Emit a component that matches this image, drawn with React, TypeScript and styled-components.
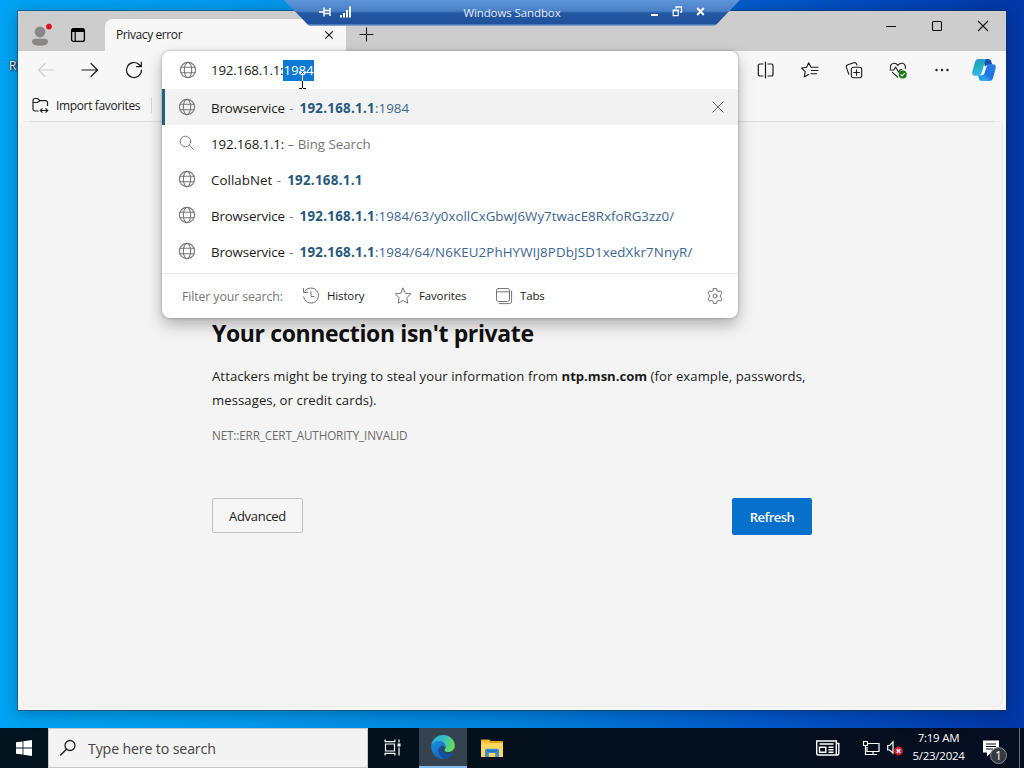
import type { ReactNode } from 'react';
import styled, { createGlobalStyle } from 'styled-components';

const suggestions = [
  { title: 'Browservice', host: '192.168.1.1', rest: ':1984', active: true },
  { title: '192.168.1.1:', note: 'Bing Search', search: true },
  { title: 'CollabNet', host: '192.168.1.1', tracking: 0.05 },
  {
    title: 'Browservice',
    host: '192.168.1.1',
    rest: ':1984/63/y0xollCxGbwJ6Wy7twacE8RxfoRG3zz0/',
  },
  {
    title: 'Browservice',
    host: '192.168.1.1',
    rest: ':1984/64/N6KEU2PhHYWIJ8PDbJSD1xedXkr7NnyR/',
    restTracking: 0.13,
  },
];

type IconProps = {
  color?: string;
  width?: number;
  children?: ReactNode;
};

function Icon({ color = '#1b1b1b', width = 1.1, children }: IconProps) {
  return (
    <svg
      width="20"
      height="20"
      viewBox="0 0 20 20"
      fill="none"
      stroke={color}
      strokeWidth={width}
      strokeLinecap="round"
      strokeLinejoin="round"
    >
      {children}
    </svg>
  );
}

function Globe() {
  return (
    <Icon color="#757575">
      <circle cx="10" cy="10" r="7.6" />
      <ellipse cx="10" cy="10" rx="3.7" ry="7.6" />
      <path d="M3.2 7.2h13.6M3.2 12.8h13.6" />
    </Icon>
  );
}

function Magnifier() {
  return (
    <Icon color="#7a7a7a" width={1}>
      <circle cx="8.5" cy="8.5" r="5.3" />
      <path d="M12.4 12.4l4.3 4.2" />
    </Icon>
  );
}

function TitleBar() {
  return (
    <TitleStrip>
      <ProfileBox>
        <svg width="24" height="26" viewBox="0 0 24 26">
          <circle cx="12" cy="11" r="5.4" fill="#8a8886" />
          <path
            d="M4 20.5c0-2 1.5-2.8 3-2.8h10c1.5 0 3 .8 3 2.8 0 3-3.5 4.3-8 4.3s-8-1.3-8-4.3z"
            fill="#8a8886"
          />
          <circle cx="21" cy="5.6" r="2.9" fill="#e01020" />
        </svg>
      </ProfileBox>
      <TabActionsBox>
        <svg width="16" height="16" viewBox="0 0 16 16">
          <rect x="1.6" y="1.6" width="12.8" height="12.8" rx="2" fill="none" stroke="#000" strokeWidth="1.3" />
          <path d="M1.5 5V3.2C1.5 2 2.3 1.5 3.2 1.5h9.6c1 0 1.7.6 1.7 1.7V5z" fill="#000" />
          <path d="M5.2 5v9.5" stroke="#000" strokeWidth="1.2" />
        </svg>
      </TabActionsBox>
      <Tab>
        <TabTitle>Privacy error</TabTitle>
        <svg width="10" height="10" viewBox="0 0 10 10">
          <path d="M1.3 1.3l7.4 7.4M8.7 1.3L1.3 8.7" stroke="#1b1b1b" strokeWidth="1.2" />
        </svg>
      </Tab>
      <NewTab>
        <svg width="15" height="15" viewBox="0 0 15 15">
          <path d="M7.5 .5v14M.5 7.5h14" stroke="#1b1b1b" strokeWidth="1.1" />
        </svg>
      </NewTab>
      <CaptionButtons>
        <svg width="46" height="32" viewBox="0 0 46 32">
          <path d="M18 15.5h10" stroke="#111" />
        </svg>
        <svg width="46" height="32" viewBox="0 0 46 32">
          <rect x="18.5" y="10.5" width="9" height="9" rx="1" fill="none" stroke="#111" strokeWidth="1.1" />
        </svg>
        <svg width="46" height="32" viewBox="0 0 46 32">
          <path d="M18 10l10 10M28 10l-10 10" stroke="#111" strokeWidth="1.1" />
        </svg>
      </CaptionButtons>
    </TitleStrip>
  );
}

function Toolbar() {
  return (
    <ToolbarRow>
      <ToolGroup>
        <ToolButton>
          <Icon color="#cfcfcf">
            <path d="M17.5 10H2.5M9 3.5L2.5 10 9 16.5" />
          </Icon>
        </ToolButton>
        <ToolButton>
          <Icon width={1.2}>
            <path d="M2 10h15.5M11 3.5l6.5 6.5-6.5 6.5" />
          </Icon>
        </ToolButton>
        <ToolButton>
          <Icon width={1.2}>
            <path d="M17.5 10a7.5 7.5 0 1 1-2.4-5.5l2 2M17.3 2v4.7h-4.7" />
          </Icon>
        </ToolButton>
      </ToolGroup>
      <ToolGroup>
        <ToolButton>
          <Icon width={1.2}>
            <path d="M7 4H3.9a1.6 1.6 0 0 0-1.6 1.6v8.8A1.6 1.6 0 0 0 3.900 16H7M12 4h3.400a1.600 1.600 0 0 1 1.600 1.600v8.800a1.600 1.600 0 0 1-1.600 1.600H12M9.500 2v16" />
          </Icon>
        </ToolButton>
        <ToolButton>
          <Icon>
            <path d="M11 7.3L8.7 2.8 6.6 7.3 1.6 8l3.6 3.6-.9 5.2 4.3-2.3M11 7.3h7M11.5 10.5H18M11 13.7h5.5" />
          </Icon>
        </ToolButton>
        <ToolButton>
          <Icon>
            <rect x="7.3" y="7.3" width="10.4" height="10.4" rx="2.2" />
            <path d="M12.5 9.7v5.6M9.7 12.5h5.6M4.8 14.3L2.4 7.4a2.2 2.2 0 0 1 1.4-2.7l6-2a2.2 2.2 0 0 1 2.8 1.4l.3 1" />
          </Icon>
        </ToolButton>
        <ToolButton>
          <Icon>
            <path d="M2.5 8.6c-.7-2.9 1-5.3 3.6-5.3 1.7 0 2.9.8 3.8 2.1.9-1.3 2.1-2.1 3.8-2.1 2.6 0 4.3 2.4 3.7 5.2M2 10h3.8l1.8-3 3 5 1.7-2.3h1.8M4.5 12.4l5.2 4.8" />
            <circle cx="14.7" cy="14.6" r="4" fill="#107c10" stroke="none" />
            <path d="M12.9 14.7l1.3 1.3 2.3-2.6" stroke="#fff" />
          </Icon>
        </ToolButton>
        <ToolButton>
          <Icon>
            <g fill="#1b1b1b" stroke="none">
              <circle cx="4.5" cy="10" r="1.2" />
              <circle cx="10" cy="10" r="1.2" />
              <circle cx="15.5" cy="10" r="1.2" />
            </g>
          </Icon>
        </ToolButton>
        <CopilotLogo />
      </ToolGroup>
    </ToolbarRow>
  );
}

function CopilotLogo() {
  return (
    <svg width="40" height="26" viewBox="0 0 40 26">
      <defs>
        <linearGradient id="copilotLeft" x1="0" y1="0" x2="0.3" y2="1">
          <stop offset="0" stopColor="#2b8fd0" />
          <stop offset="0.5" stopColor="#1fb0bd" />
          <stop offset="1" stopColor="#35b5f2" />
        </linearGradient>
        <linearGradient id="copilotRight" x1="0" y1="1" x2="0.7" y2="0">
          <stop offset="0" stopColor="#38c6f4" />
          <stop offset="0.45" stopColor="#2173ea" />
          <stop offset="1" stopColor="#2b7be4" />
        </linearGradient>
      </defs>
      <path d="M19 2h5.2c1.8 0 2.6.9 3.1 2.4l1 3.4h-3.6c-2 0-3 1-3.5 2.8z" fill="#1750b0" />
      <path d="M21 24h-3c-1.8 0-2.6-1-3.2-2.7l-.9-3.1h3.4c2 0 2.8-1 3.4-2.9l1.4-3z" fill="#1aa0e8" />
      <path
        d="M14.4 2h8.6c-1.4.6-1.9 1.9-2.3 3.4l-2.9 10.2c-.6 2-1.7 3.2-3.6 3.2h-3c-2.6 0-3.5-1.8-2.8-4.2l2.5-9.3C11.5 3.2 12.5 2 14.4 2z"
        fill="url(#copilotLeft)"
      />
      <path
        d="M25.6 24H17c1.4-.6 1.9-1.9 2.3-3.4l2.9-10.2c.6-2 1.7-3.2 3.6-3.2h3c2.6 0 3.5 1.8 2.8 4.2l-2.5 9.3c-.6 2.1-1.6 3.3-3.5 3.3z"
        fill="url(#copilotRight)"
      />
      <path d="M20.800 9.200h1.800l-2.800 8.200h-2.600c.8-.5 1.200-1.300 1.500-2.300z" fill="#f7f7f7" />
    </svg>
  );
}

function AddressPopup() {
  return (
    <Popup>
      <AddressRow>
        <IconSlot $nudge={1}>
          <Globe />
        </IconSlot>
        <AddressText>
          192.168.1.1:<Selection>1984</Selection>
        </AddressText>
        <TextCursor width="9" height="19" viewBox="0 0 9 19">
          <path d="M4.500 2v8" stroke="#fff" />
          <path d="M4.500 10v7M1 17.500h3M5 17.500h3" stroke="#111" />
          <path d="M1 1.500h3M5 1.500h3" stroke="#fff" />
        </TextCursor>
      </AddressRow>
      {suggestions.map((item, index) => (
        <SuggestionRow key={index} $active={item.active}>
          <IconSlot>{item.search ? <Magnifier /> : <Globe />}</IconSlot>
          <SuggestionText $tracking={item.tracking}>
            <Name>{item.title}</Name>
            {item.note && <Note> – {item.note}</Note>}
            {item.host && <Dash>-</Dash>}
            {item.host && <Host>{item.host}</Host>}
            {item.rest && <Rest $tracking={item.restTracking}>{item.rest}</Rest>}
          </SuggestionText>
          {item.active && (
            <svg width="14" height="14" viewBox="0 0 14 14">
              <path d="M1.500 1.500l11 11M12.500 1.500l-11 11" stroke="#6b6b6b" />
            </svg>
          )}
        </SuggestionRow>
      ))}
      <FilterRow>
        <FilterLabel>Filter your search:</FilterLabel>
        <FilterButton $width={92}>
          <Icon color="#666" width={0.9}>
            <path d="M3.700 5.200A7.600 7.600 0 1 1 2.500 11M2.500 2.500v4h4M10 5.800v4.700h3" />
          </Icon>
          History
        </FilterButton>
        <FilterButton $width={101}>
          <Icon color="#666" width={0.9}>
            <path d="M10 2.200l2.400 5 5.400.7-4 3.800 1 5.500-4.800-2.700-4.800 2.700 1-5.500-4-3.800 5.400-.7z" />
          </Icon>
          Favorites
        </FilterButton>
        <FilterButton $width={60}>
          <Icon color="#666" width={0.9}>
            <rect x="2.500" y="2.500" width="13" height="13" rx="2" />
            <path d="M2.500 5.800h13M5 17.600h10.200a2.400 2.400 0 0 0 2.400-2.400V5" />
          </Icon>
          Tabs
        </FilterButton>
        <SettingsSlot>
          <Icon color="#666" width={0.95}>
            <path d="M8.500 2.600h3l.5 2.200 1.400.8 2.200-.7 1.500 2.600L15.400 9v2l1.700 1.500-1.500 2.600-2.200-.7-1.400.8-.5 2.200h-3L8 15.200l-1.400-.8-2.200.7-1.500-2.600L4.600 11V9L2.900 7.500l1.500-2.600 2.200.7L8 4.800z" />
            <circle cx="10" cy="10" r="2" />
          </Icon>
        </SettingsSlot>
      </FilterRow>
    </Popup>
  );
}

function SandboxBar() {
  return (
    <ConnectionBar>
      <ConnectionTools $gap={8}>
        <svg width="14" height="12" viewBox="0 0 14 12">
          <path d="M1 6h5M6 1.500v9M12 2v8M6 4.500h6M6 7.500h6" stroke="#fff" strokeWidth="1.500" />
        </svg>
        <svg width="12" height="12" viewBox="0 0 12 12">
          <path d="M1 9v2.500M4 7v4.500M7 4v7.500M10 .5v11" stroke="#fff" strokeWidth="1.900" />
        </svg>
      </ConnectionTools>
      <ConnectionTitle>Windows Sandbox</ConnectionTitle>
      <ConnectionTools $gap={11}>
        <svg width="12" height="12" viewBox="0 0 12 12">
          <path d="M2 9h7" stroke="#fff" strokeWidth="2" />
        </svg>
        <svg width="12" height="12" viewBox="0 0 12 12">
          <path d="M1.200 4.600h5v5h-5zM.6 4.200h6.200M4 2.800V1.100h5.500v5H8M3.500 .9h6.600" fill="none" stroke="#fff" strokeWidth="1.200" />
        </svg>
        <svg width="12" height="12" viewBox="0 0 12 12">
          <path d="M2.200 2l6.600 7M8.800 2L2.200 9" stroke="#fff" strokeWidth="1.900" />
        </svg>
      </ConnectionTools>
    </ConnectionBar>
  );
}

function Taskbar() {
  return (
    <TaskbarRow>
      <StartButton>
        <svg width="16" height="16" viewBox="0 0 16 16" fill="#fff">
          <path d="M0 2.300l6.600-.9v6.200H0zM7.400 1.300L16 .1v7.500H7.400zM0 8.400h6.600v6.200L0 13.700zM7.400 8.400H16v7.500l-8.600-1.200z" />
        </svg>
      </StartButton>
      <SearchBox>
        <svg width="18" height="18" viewBox="0 0 18 18">
          <circle cx="11" cy="6.500" r="5" fill="none" stroke="#222" strokeWidth="1.300" />
          <path d="M7.400 10.200L1.200 16.500" stroke="#222" strokeWidth="1.400" />
        </svg>
        Type here to search
      </SearchBox>
      <TaskButtons>
        <TaskButton $width={48}>
          <svg width="18" height="18" viewBox="0 0 18 18" fill="none" stroke="#fff" strokeWidth="1.200">
            <path d="M1.500 6h9v7h-9zM1.100 1.500v2.200h9.800V1.500M1.100 17.500v-2.200h9.800v2.200M15 1.500v3M15 9.500v8" />
            <path d="M13.500 5.500h3v3h-3z" fill="#fff" stroke="none" />
          </svg>
        </TaskButton>
        <TaskButton $width={48} $active>
          <EdgeLogo />
        </TaskButton>
        <TaskButton $width={46}>
          <svg width="24" height="22" viewBox="0 0 24 22">
            <path d="M1 3.500h8l2 1.500h12v4H1z" fill="#e5a11c" />
            <path d="M1 7h22v14H1z" fill="#ffd75e" />
            <path d="M1 4.500h9l-1.500 3H1z" fill="#f8c33d" />
            <path d="M5 21v-6.500c0-1 .8-1.800 1.800-1.800h10.400c1 0 1.800.8 1.800 1.800V21h-3.800v-4H8.800v4z" fill="#3b8ed6" />
            <path d="M7 15h10" stroke="#1c64a8" strokeWidth="1.200" />
          </svg>
        </TaskButton>
      </TaskButtons>
      <Tray>
        <svg width="26" height="18" viewBox="0 0 26 18" fill="none" stroke="#fff" strokeWidth="1.400">
          <path d="M1.700 2h19.600v14H3a1.400 1.400 0 0 1-1.300-1.400zM21.300 4.500h2.500v10A1.500 1.500 0 0 1 22.300 16h-1M4.500 5h14M4.500 8.300h6.300v4.900H4.500zM13.500 8.300h5M13.500 10.700h5M13.500 13.200h5" />
        </svg>
        <TrayIcons>
          <svg width="18" height="16" viewBox="0 0 18 16" fill="none" stroke="#fff" strokeWidth="1.200">
            <path d="M6 3.500h11v8H5V7M7 14.500h8M11 11.500v3" />
            <path d="M1.500 1.500h4v4h-4zM3.500 5.500v9H7" />
          </svg>
          <svg width="18" height="16" viewBox="0 0 18 16">
            <path d="M1.700 5.500h2L7 1.800v11.400L3.700 10h-2z" fill="none" stroke="#fff" strokeWidth="1.200" />
            <circle cx="12.500" cy="11" r="4.400" fill="#d41f35" />
            <path d="M10.800 9.300l3.400 3.400M14.200 9.300l-3.400 3.400" stroke="#fff" strokeWidth="1.300" />
          </svg>
        </TrayIcons>
        <Clock>
          <span>7:19 AM</span>
          <span>5/23/2024</span>
        </Clock>
        <Notifications>
          <svg width="18" height="17" viewBox="0 0 18 17">
            <path d="M1 .5h16v12H9l-4 4v-4H1z" fill="#fff" />
            <path d="M4 4h10M4 6.500h10M4 9h7" stroke="#050f1f" strokeWidth="1.200" />
          </svg>
          <Badge>1</Badge>
        </Notifications>
      </Tray>
    </TaskbarRow>
  );
}

function EdgeLogo() {
  return (
    <svg width="24" height="24" viewBox="0 0 24 24">
      <defs>
        <linearGradient id="edgeTop" x1="0" y1="0.2" x2="1" y2="0.5">
          <stop offset="0" stopColor="#2ba6e0" />
          <stop offset="0.5" stopColor="#35c1c4" />
          <stop offset="1" stopColor="#68dc55" />
        </linearGradient>
        <linearGradient id="edgeLow" x1="0" y1="0" x2="0.6" y2="1">
          <stop offset="0" stopColor="#1b90dd" />
          <stop offset="1" stopColor="#1566bd" />
        </linearGradient>
      </defs>
      <path
        d="M.3 10.500C1 4.500 6 .1 12 .1c6.800 0 11.800 4.900 11.800 10.500 0 4-3 6.500-6.500 6.500-2.500 0-3.900-.9-3.900-1.900 0-.8 1.100-1.300 1.100-3 0-2.700-2.700-4.700-6-4.700-4 0-7.300 1.500-8.200 3z"
        fill="url(#edgeTop)"
      />
      <path
        d="M.2 11.500C.7 8 4.500 6 8.500 6c3.500 0 6 2.300 6 5.200 0 .6-.1 1.300-.4 1.800-.7-1.500-2-2.300-3-2.300-2.600 1-4 3-3.600 5.800.6 4.300 4.500 7.300 7.600 7.100-.9.300-2 .4-3.100.4C5.300 24 0 18.700.2 11.500z"
        fill="url(#edgeLow)"
      />
      <path
        d="M7.500 16.500c-.4-2.800 1-4.800 3.600-5.800-1 2.500.1 8 6.900 8 1.600 0 3-.6 4-1.100.5-.2.800.2.500.6-2 3-4.500 4.800-7.400 5.400-3.100.2-7-2.800-7.600-7.100z"
        fill="#14509f"
      />
    </svg>
  );
}

function App() {
  return (
    <Desktop>
      <GlobalStyle />
      <DesktopLabel>R</DesktopLabel>
      <BrowserWindow>
        <TitleBar />
        <Toolbar />
        <FavoritesBar>
          <svg width="17" height="17" viewBox="0 0 17 17" fill="none" stroke="#222" strokeWidth="1.200">
            <path d="M6.500 14H3a2 2 0 0 1-2-2V3.500a2 2 0 0 1 2-2h2.600L8 3.700h5.500a2 2 0 0 1 2 2V9M1 5.500h4.500L8 3.700M8.500 13.500H15.500M10.500 11.300l-2.200 2.200 2.200 2.200M13.500 11.300l2.200 2.200-2.200 2.200" />
          </svg>
          Import favorites
          <FavoritesDivider />
        </FavoritesBar>
        <Page>
          <Heading>Your connection isn't private</Heading>
          <Paragraph>
            Attackers might be trying to steal your information from <b>ntp.msn.com</b> (for example, passwords,
            <br />
            messages, or credit cards).
          </Paragraph>
          <ErrorCode>NET::ERR_CERT_AUTHORITY_INVALID</ErrorCode>
          <Actions>
            <AdvancedButton>Advanced</AdvancedButton>
            <RefreshButton>Refresh</RefreshButton>
          </Actions>
        </Page>
        <AddressPopup />
      </BrowserWindow>
      <SandboxBar />
      <Taskbar />
    </Desktop>
  );
}

const GlobalStyle = createGlobalStyle`
  * {
    box-sizing: border-box;
  }

  body {
    margin: 0;
    overflow: hidden;
    font-family: 'Open Sans', 'Noto Sans', sans-serif;
    color: #1b1b1b;
  }

  svg {
    display: block;
    flex-shrink: 0;
  }

  button {
    font-family: inherit;
    padding: 0;
  }
`;

const Desktop = styled.div`
  position: relative;
  display: flex;
  flex-direction: column;
  justify-content: space-between;
  width: 1024px;
  height: 768px;
  padding-top: 11px;
  overflow: hidden;
  background: linear-gradient(90deg, #00a4f2 0%, #0398ea 25%, #0082dc 50%, #0257c8 75%, #0238a8 98%);
`;

const DesktopLabel = styled.span`
  position: absolute;
  left: 9px;
  top: 58px;
  font-size: 12px;
  line-height: 16px;
  color: white;
  text-shadow: 1px 1px 2px black, 0 0 2px rgba(0, 0, 0, 0.7);
`;

const BrowserWindow = styled.div`
  position: relative;
  display: flex;
  flex-direction: column;
  width: 988px;
  height: 699px;
  margin-left: 18px;
  background-color: #f7f7f7;
  box-shadow: 0 0 0 1px rgba(20, 50, 80, 0.5), 0 3px 14px rgba(0, 20, 60, 0.35);
`;

const TitleStrip = styled.div`
  display: flex;
  height: 40px;
  flex-shrink: 0;
  background-color: #cdcdcd;
`;

const ProfileBox = styled.div`
  width: 50px;
  padding: 10px 0 0 10px;
`;

const TabActionsBox = styled.div`
  width: 37px;
  padding: 16px 0 0 2px;
`;

const Tab = styled.div`
  display: flex;
  align-items: center;
  justify-content: space-between;
  width: 241px;
  height: 32px;
  margin-top: 8px;
  padding: 0 12px 0 11px;
  border-radius: 8px 8px 0 0;
  background-color: #f7f7f7;
`;

const TabTitle = styled.span`
  padding-bottom: 1px;
  font-size: 12px;
  letter-spacing: -0.4px;
`;

const NewTab = styled.div`
  flex: 1;
  padding: 16px 0 0 13px;
`;

const CaptionButtons = styled.div`
  display: flex;
`;

const ToolbarRow = styled.div`
  display: flex;
  justify-content: space-between;
  height: 38px;
  padding: 0 2px 0 6px;
  flex-shrink: 0;
`;

const ToolGroup = styled.div`
  display: flex;
  align-items: center;
`;

const ToolButton = styled.div`
  display: flex;
  justify-content: center;
  width: 44px;
`;

const FavoritesBar = styled.div`
  display: flex;
  align-items: center;
  gap: 7px;
  height: 33px;
  margin: 0 12px;
  padding-left: 2px;
  flex-shrink: 0;
  border-bottom: 1px solid #e8e8e8;
  font-size: 12px;
  letter-spacing: -0.36px;
`;

const FavoritesDivider = styled.div`
  width: 1px;
  height: 16px;
  margin-left: 4px;
  background-color: #d8d8d8;
`;

const Page = styled.div`
  flex: 1;
  margin: 0 4px 4px;
  padding: 196px 190px 0;
  border-radius: 0 0 6px 6px;
  background-color: #f4f4f4;
  box-shadow: 0 0 2px rgba(0, 0, 0, 0.15);
`;

const Heading = styled.h1`
  margin: 0;
  font-size: 23px;
  line-height: 30px;
  font-weight: 700;
  letter-spacing: -0.37px;
  color: #111;
  white-space: nowrap;
`;

const Paragraph = styled.p`
  margin: 16px 0 0;
  font-size: 13.1px;
  line-height: 24px;
  letter-spacing: 0.09px;
  white-space: nowrap;

  b {
    letter-spacing: -0.02px;
  }
`;

const ErrorCode = styled.div`
  margin-top: 14px;
  font-size: 11.7px;
  line-height: 18px;
  letter-spacing: -0.13px;
  color: #6a6a6a;
`;

const Actions = styled.div`
  display: flex;
  justify-content: space-between;
  width: 600px;
  margin-top: 54px;
`;

const AdvancedButton = styled.button`
  width: 91px;
  height: 35px;
  border: 1px solid #c2c2c2;
  border-radius: 2px;
  background-color: #f6f6f6;
  color: #222;
  font-size: 13px;
  letter-spacing: -0.3px;
`;

const RefreshButton = styled.button`
  width: 80px;
  height: 37px;
  border: none;
  border-radius: 2px;
  background-color: #0670cc;
  color: white;
  font-size: 13px;
  font-weight: 600;
  letter-spacing: -0.55px;
`;

const Popup = styled.div`
  position: absolute;
  left: 144px;
  top: 40px;
  width: 576px;
  height: 267px;
  border-radius: 8px;
  background-color: white;
  box-shadow: 0 0 3px rgba(0, 0, 0, 0.3), 0 7px 16px rgba(0, 0, 0, 0.28);
`;

const AddressRow = styled.div`
  position: relative;
  display: flex;
  align-items: center;
  height: 38px;
  padding-left: 15px;
`;

const AddressText = styled.span`
  font-size: 13.3px;
  letter-spacing: -0.2px;
`;

const Selection = styled.span`
  display: inline-block;
  height: 21px;
  line-height: 21px;
  background-color: #0a78d4;
  color: white;
  letter-spacing: -0.05px;
`;

const TextCursor = styled.svg`
  position: absolute;
  left: 136px;
  top: 20px;
`;

const SuggestionRow = styled.div<{ $active?: boolean }>`
  display: flex;
  align-items: center;
  height: 36px;
  padding: 0 13px 0 12px;
  border-left: 3px solid ${({ $active }) => ($active ? '#1f6283' : 'transparent')};
  background-color: ${({ $active }) => ($active ? '#f2f2f2' : 'transparent')};
`;

const IconSlot = styled.div<{ $nudge?: number }>`
  width: 34px;
  padding-left: ${({ $nudge = 0 }) => $nudge}px;
`;

const SuggestionText = styled.span<{ $tracking?: number }>`
  flex: 1;
  padding-top: 2px;
  font-size: 13.3px;
  letter-spacing: ${({ $tracking = -0.14 }) => $tracking}px;
  white-space: pre;
`;

const Name = styled.span`
  color: #1b1b1b;
`;

const Note = styled.span`
  color: #767676;
  letter-spacing: 0;
`;

const Dash = styled.span`
  padding: 0 6px 0 4.5px;
  color: #767676;
`;

const Host = styled.b`
  color: #25597c;
  letter-spacing: 0.3px;
`;

const Rest = styled.span<{ $tracking?: number }>`
  color: #3d668f;
  letter-spacing: ${({ $tracking = 0.03 }) => $tracking}px;
`;

const FilterRow = styled.div`
  display: flex;
  align-items: center;
  height: 45px;
  margin-top: 4px;
  padding: 0 13px 0 20px;
  border-top: 1px solid #e9e9e9;
`;

const FilterLabel = styled.span`
  width: 119px;
  font-size: 12.3px;
  letter-spacing: -0.1px;
  color: #767676;
  white-space: nowrap;
`;

const FilterButton = styled.div<{ $width: number }>`
  display: flex;
  align-items: center;
  gap: 6px;
  width: ${({ $width }) => $width}px;
  padding-bottom: 1px;
  font-size: 11.5px;
  letter-spacing: -0.15px;
`;

const SettingsSlot = styled.div`
  margin-left: auto;
`;

const ConnectionBar = styled.div`
  position: absolute;
  left: 284px;
  top: 0;
  display: flex;
  justify-content: space-between;
  width: 456px;
  height: 26px;
  padding: 6px 33px 0 34px;
  clip-path: polygon(0 0, 100% 0, 94.5% 100%, 5.5% 100%);
  background: linear-gradient(180deg, #5f94d8 0, #4a80c6 11px, #2459a4 13px, #20509b 24px, #7ba1d0 25px);
`;

const ConnectionTools = styled.div<{ $gap: number }>`
  display: flex;
  gap: ${({ $gap }) => $gap}px;
`;

const ConnectionTitle = styled.span`
  padding-left: 23px;
  font-size: 11.5px;
  line-height: 14px;
  letter-spacing: -0.1px;
  color: #e4eefb;
`;

const TaskbarRow = styled.div`
  display: flex;
  height: 40px;
  background: linear-gradient(90deg, #02141f, #03101c 50%, #050d20);
  color: white;
`;

const StartButton = styled.div`
  display: flex;
  align-items: center;
  justify-content: center;
  width: 48px;
`;

const SearchBox = styled.div`
  display: flex;
  align-items: center;
  gap: 11px;
  width: 320px;
  padding-left: 10px;
  border: 1px solid #c8c8c8;
  background-color: #f3f3f3;
  color: #444;
  font-size: 14.2px;
  letter-spacing: -0.15px;
`;

const TaskButtons = styled.div`
  display: flex;
  gap: 2px;
  padding-left: 1px;
`;

const TaskButton = styled.div<{ $width: number; $active?: boolean }>`
  display: flex;
  align-items: center;
  justify-content: center;
  width: ${({ $width }) => $width}px;
  border-bottom: 2px solid ${({ $active }) => ($active ? '#83b9ee' : 'transparent')};
  background-color: ${({ $active }) => ($active ? '#34434f' : 'transparent')};
`;

const Tray = styled.div`
  display: flex;
  align-items: center;
  margin-left: auto;
  margin-right: 4px;
  border-right: 1px solid #6c7380;
`;

const TrayIcons = styled.div`
  display: flex;
  gap: 6px;
  margin-left: 21px;
`;

const Clock = styled.div`
  display: flex;
  flex-direction: column;
  align-items: center;
  width: 68px;
  padding: 0 0 2px 1px;
  font-size: 11.5px;
  line-height: 18px;
  letter-spacing: -0.25px;
`;

const Notifications = styled.div`
  position: relative;
  width: 47px;
  padding-left: 10px;
`;

const Badge = styled.span`
  position: absolute;
  left: 18px;
  top: 7px;
  width: 17px;
  height: 17px;
  border: 1px solid #8b8f95;
  border-radius: 50%;
  background-color: #363b42;
  font-size: 12px;
  line-height: 15px;
  text-align: center;
`;

export default App;
